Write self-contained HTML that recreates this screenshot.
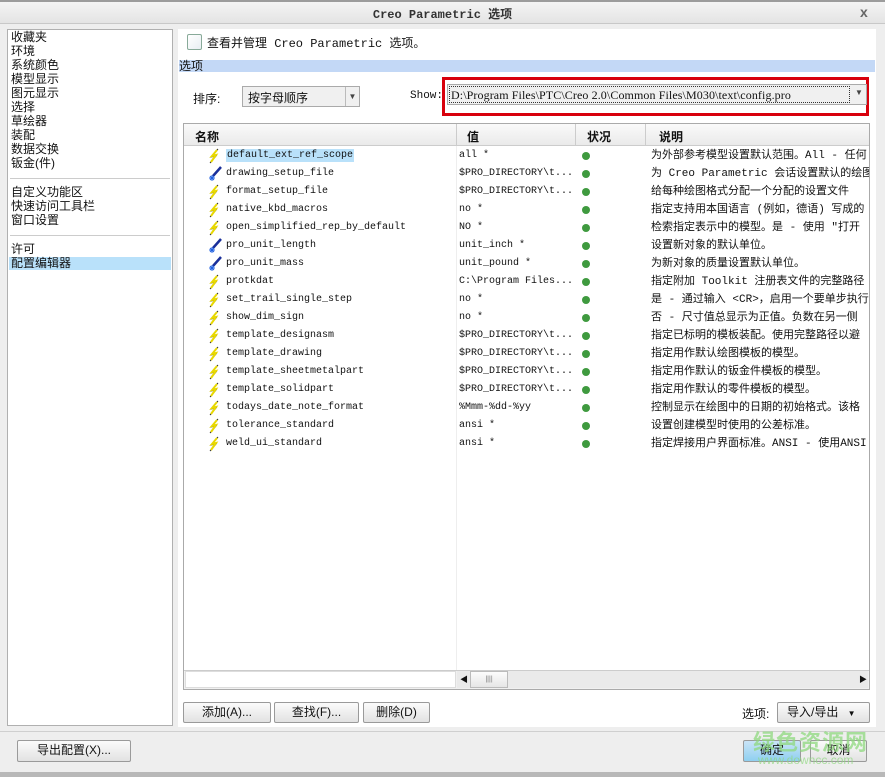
<!DOCTYPE html>
<html><head><meta charset="utf-8"><style>
*{margin:0;padding:0;box-sizing:border-box}
body{width:885px;height:777px;background:#eeeeee;position:relative;overflow:hidden;font-family:"Liberation Sans","Noto Sans CJK SC",sans-serif;font-size:12px;color:#111}
.a{position:absolute}
.cn{font-family:"Liberation Sans","Noto Sans CJK SC",sans-serif;font-size:12px}
.mono{font-family:"Liberation Mono","Noto Sans CJK SC",monospace;font-size:10px}
.d{font-family:"Liberation Mono","Noto Sans CJK SC",monospace;font-size:11px;left:467px;white-space:nowrap;width:218px;overflow:hidden}
.btn{position:absolute;height:21px;border:1px solid #9a9a9a;border-radius:2px;background:linear-gradient(#fbfbfb,#e2e2e2);font-size:12px;text-align:center;line-height:19px}
.row{position:absolute;left:0;height:18px;line-height:18px;width:686px}
.dot{position:absolute;left:398px;top:5px;width:8px;height:8px;border-radius:50%;background:#3f9a3f}
</style></head><body>
<div class="a" style="left:0;top:0;width:885px;height:2px;background:#9c9c9c"></div>
<div class="a" style="left:0;top:2px;width:885px;height:22px;background:linear-gradient(#f4f4f4,#e4e4e4);border-bottom:1px solid #c8c8c8"></div>
<div class="a" style="left:0;top:5px;width:885px;text-align:center;font-family:'Liberation Mono','Noto Sans CJK SC',monospace;font-weight:bold;font-size:12px;color:#333">Creo Parametric 选项</div>
<div class="a" style="left:860px;top:4px;font-size:14px;color:#666;font-weight:bold">x</div>
<div class="a" style="left:0;top:772px;width:885px;height:5px;background:#b8b8b8"></div>

<div class="a" style="left:7px;top:29px;width:166px;height:697px;background:#fff;border:1px solid #b0b0b0"></div>
<div class="a cn" style="left:11px;top:30px;line-height:14px">收藏夹<br>环境<br>系统颜色<br>模型显示<br>图元显示<br>选择<br>草绘器<br>装配<br>数据交换<br>钣金(件)</div>
<div class="a" style="left:10px;top:178px;width:160px;height:1px;background:#ccc"></div>
<div class="a cn" style="left:11px;top:185px;line-height:14px">自定义功能区<br>快速访问工具栏<br>窗口设置</div>
<div class="a" style="left:10px;top:235px;width:160px;height:1px;background:#ccc"></div>
<div class="a" style="left:9px;top:257px;width:162px;height:13px;background:#b9e1fa"></div>
<div class="a cn" style="left:11px;top:242px;line-height:14px">许可<br>配置编辑器</div>

<div class="a" style="left:178px;top:29px;width:698px;height:698px;background:#fff"></div>
<div class="a" style="left:187px;top:34px;width:15px;height:16px;border:1px solid #8a9;border-radius:2px;background:linear-gradient(135deg,#fff,#e8eef2)"></div>
<div class="a" style="left:207px;top:34px;font-family:'Liberation Mono','Noto Sans CJK SC',monospace;font-size:12px">查看并管理 Creo Parametric 选项。</div>
<div class="a cn" style="left:179px;top:60px;width:696px;height:12px;background:#c3d8f6;line-height:12px">选项</div>
<div class="a cn" style="left:193px;top:90px">排序:</div>
<div class="a" style="left:242px;top:86px;width:118px;height:21px;border:1px solid #aaa;background:#f0f0f0"></div>
<div class="a cn" style="left:248px;top:89px">按字母顺序</div>
<div class="a" style="left:345px;top:87px;width:14px;height:19px;border-left:1px solid #bbb;font-size:8px;text-align:center;line-height:19px;color:#444">▼</div>
<div class="a mono" style="left:410px;top:90px;font-size:11px">Show:</div>
<div class="a" style="left:442px;top:77px;width:427px;height:39px;border:3px solid #d8000c"></div>
<div class="a" style="left:447px;top:84px;width:420px;height:21px;border:1px solid #aaa;background:#f0f0f0"></div>
<div class="a" style="left:449px;top:86px;width:401px;height:17px;border:1px dotted #333"></div>
<div class="a" style="left:451px;top:88px;font-family:'Liberation Serif',serif;font-size:12px;letter-spacing:0.1px">D:\Program Files\PTC\Creo 2.0\Common Files\M030\text\config.pro</div>
<div class="a" style="left:855px;top:88px;font-size:8px;color:#444">▼</div>

<div class="a" style="left:183px;top:123px;width:687px;height:567px;border:1px solid #aaa;background:#fff"></div>
<div class="a" style="left:184px;top:124px;width:685px;height:22px;background:linear-gradient(#fafafa,#eaeaea);border-bottom:1px solid #ccc"></div>
<div class="a" style="left:456px;top:124px;width:1px;height:22px;background:#ccc"></div>
<div class="a" style="left:575px;top:124px;width:1px;height:22px;background:#ccc"></div>
<div class="a" style="left:645px;top:124px;width:1px;height:22px;background:#ccc"></div>
<div class="a" style="left:456px;top:146px;width:1px;height:543px;background:#eee"></div>
<div class="a cn" style="left:195px;top:128px;font-weight:bold">名称</div>
<div class="a cn" style="left:467px;top:128px;font-weight:bold">值</div>
<div class="a cn" style="left:587px;top:128px;font-weight:bold">状况</div>
<div class="a cn" style="left:659px;top:128px;font-weight:bold">说明</div>

<svg width="0" height="0" style="position:absolute"><defs>
<symbol id="z" viewBox="0 0 14 16"><path d="M10 1 L3 9 L8 8 L2 15" stroke="#333" stroke-width="1" fill="none"/><path d="M9 2 L4 8 L8 7 L3 14" stroke="#e8d800" stroke-width="2" fill="none"/></symbol>
<symbol id="b" viewBox="0 0 14 16"><path d="M13 1 L5 10" stroke="#1a2f9a" stroke-width="2.5"/><path d="M4 9v6M1 12h6M2 10l4 4M6 10l-4 4" stroke="#2060e0" stroke-width="1"/></symbol>
</defs></svg>
<div class="a mono" style="left:184px;top:147px;width:685px">
<div class="row" style="top:0"><svg class="a" style="left:24px;top:1px" width="14" height="16"><use href="#z"/></svg><span class="a" style="left:42px;top:2px;height:13px;line-height:13px;background:#b9e1fa;padding:0 1px">default_ext_ref_scope</span><span class="a" style="left:275px">all *</span><i class="dot"></i><span class="a d">为外部参考模型设置默认范围。All - 任何</span></div>
<div class="row" style="top:18px"><svg class="a" style="left:24px;top:1px" width="14" height="16"><use href="#b"/></svg><span class="a" style="left:42px">drawing_setup_file</span><span class="a" style="left:275px">$PRO_DIRECTORY\t...</span><i class="dot"></i><span class="a d">为 Creo Parametric 会话设置默认的绘图</span></div>
<div class="row" style="top:36px"><svg class="a" style="left:24px;top:1px" width="14" height="16"><use href="#z"/></svg><span class="a" style="left:42px">format_setup_file</span><span class="a" style="left:275px">$PRO_DIRECTORY\t...</span><i class="dot"></i><span class="a d">给每种绘图格式分配一个分配的设置文件</span></div>
<div class="row" style="top:54px"><svg class="a" style="left:24px;top:1px" width="14" height="16"><use href="#z"/></svg><span class="a" style="left:42px">native_kbd_macros</span><span class="a" style="left:275px">no *</span><i class="dot"></i><span class="a d">指定支持用本国语言 (例如，德语) 写成的</span></div>
<div class="row" style="top:72px"><svg class="a" style="left:24px;top:1px" width="14" height="16"><use href="#z"/></svg><span class="a" style="left:42px">open_simplified_rep_by_default</span><span class="a" style="left:275px">NO *</span><i class="dot"></i><span class="a d">检索指定表示中的模型。是 - 使用 "打开</span></div>
<div class="row" style="top:90px"><svg class="a" style="left:24px;top:1px" width="14" height="16"><use href="#b"/></svg><span class="a" style="left:42px">pro_unit_length</span><span class="a" style="left:275px">unit_inch *</span><i class="dot"></i><span class="a d">设置新对象的默认单位。</span></div>
<div class="row" style="top:108px"><svg class="a" style="left:24px;top:1px" width="14" height="16"><use href="#b"/></svg><span class="a" style="left:42px">pro_unit_mass</span><span class="a" style="left:275px">unit_pound *</span><i class="dot"></i><span class="a d">为新对象的质量设置默认单位。</span></div>
<div class="row" style="top:126px"><svg class="a" style="left:24px;top:1px" width="14" height="16"><use href="#z"/></svg><span class="a" style="left:42px">protkdat</span><span class="a" style="left:275px">C:\Program Files...</span><i class="dot"></i><span class="a d">指定附加 Toolkit 注册表文件的完整路径</span></div>
<div class="row" style="top:144px"><svg class="a" style="left:24px;top:1px" width="14" height="16"><use href="#z"/></svg><span class="a" style="left:42px">set_trail_single_step</span><span class="a" style="left:275px">no *</span><i class="dot"></i><span class="a d">是 - 通过输入 &lt;CR&gt;，启用一个要单步执行</span></div>
<div class="row" style="top:162px"><svg class="a" style="left:24px;top:1px" width="14" height="16"><use href="#z"/></svg><span class="a" style="left:42px">show_dim_sign</span><span class="a" style="left:275px">no *</span><i class="dot"></i><span class="a d">否 - 尺寸值总显示为正值。负数在另一侧</span></div>
<div class="row" style="top:180px"><svg class="a" style="left:24px;top:1px" width="14" height="16"><use href="#z"/></svg><span class="a" style="left:42px">template_designasm</span><span class="a" style="left:275px">$PRO_DIRECTORY\t...</span><i class="dot"></i><span class="a d">指定已标明的模板装配。使用完整路径以避</span></div>
<div class="row" style="top:198px"><svg class="a" style="left:24px;top:1px" width="14" height="16"><use href="#z"/></svg><span class="a" style="left:42px">template_drawing</span><span class="a" style="left:275px">$PRO_DIRECTORY\t...</span><i class="dot"></i><span class="a d">指定用作默认绘图模板的模型。</span></div>
<div class="row" style="top:216px"><svg class="a" style="left:24px;top:1px" width="14" height="16"><use href="#z"/></svg><span class="a" style="left:42px">template_sheetmetalpart</span><span class="a" style="left:275px">$PRO_DIRECTORY\t...</span><i class="dot"></i><span class="a d">指定用作默认的钣金件模板的模型。</span></div>
<div class="row" style="top:234px"><svg class="a" style="left:24px;top:1px" width="14" height="16"><use href="#z"/></svg><span class="a" style="left:42px">template_solidpart</span><span class="a" style="left:275px">$PRO_DIRECTORY\t...</span><i class="dot"></i><span class="a d">指定用作默认的零件模板的模型。</span></div>
<div class="row" style="top:252px"><svg class="a" style="left:24px;top:1px" width="14" height="16"><use href="#z"/></svg><span class="a" style="left:42px">todays_date_note_format</span><span class="a" style="left:275px">%Mmm-%dd-%yy</span><i class="dot"></i><span class="a d">控制显示在绘图中的日期的初始格式。该格</span></div>
<div class="row" style="top:270px"><svg class="a" style="left:24px;top:1px" width="14" height="16"><use href="#z"/></svg><span class="a" style="left:42px">tolerance_standard</span><span class="a" style="left:275px">ansi *</span><i class="dot"></i><span class="a d">设置创建模型时使用的公差标准。</span></div>
<div class="row" style="top:288px"><svg class="a" style="left:24px;top:1px" width="14" height="16"><use href="#z"/></svg><span class="a" style="left:42px">weld_ui_standard</span><span class="a" style="left:275px">ansi *</span><i class="dot"></i><span class="a d">指定焊接用户界面标准。ANSI - 使用ANSI</span></div>
</div>

<div class="a" style="left:184px;top:670px;width:685px;height:19px;border-top:1px solid #ccc;background:#f0f0f0"></div>
<div class="a" style="left:185px;top:671px;width:271px;height:17px;background:#fff;border:1px solid #ddd"></div>
<div class="a" style="left:457px;top:671px;width:411px;height:17px;background:#eaeaea"></div>
<div class="a" style="left:470px;top:671px;width:38px;height:17px;background:linear-gradient(#fcfcfc,#e6e6e6);border:1px solid #bbb;font-size:7px;text-align:center;line-height:15px;color:#777">||||</div>
<div class="a" style="left:460px;top:674px;font-size:8px">◀</div>
<div class="a" style="left:859px;top:674px;font-size:8px">▶</div>

<div class="btn" style="left:183px;top:702px;width:88px">添加(A)...</div>
<div class="btn" style="left:274px;top:702px;width:85px">查找(F)...</div>
<div class="btn" style="left:363px;top:702px;width:67px">删除(D)</div>
<div class="a cn" style="left:742px;top:705px">选项:</div>
<div class="btn" style="left:777px;top:702px;width:93px;text-align:left;padding-left:9px">导入/导出 <span style="font-size:8px;margin-left:6px">▼</span></div>

<div class="a" style="left:0;top:731px;width:885px;height:1px;background:#cfcfcf"></div>
<div class="btn" style="left:17px;top:740px;width:114px;height:22px">导出配置(X)...</div>
<div class="btn" style="left:743px;top:740px;width:58px;height:22px;background:linear-gradient(#c9e4f7,#8fd0f0)">确定</div>
<div class="btn" style="left:810px;top:740px;width:57px;height:22px">取消</div>
<div class="a" style="left:753px;top:725px;font-size:22px;color:#8fd97f;opacity:0.75;font-weight:bold;letter-spacing:1px">绿色资源网</div>
<div class="a" style="left:758px;top:753px;font-size:12px;color:#8fd97f;opacity:0.7">www.downcc.com</div>
</body></html>
